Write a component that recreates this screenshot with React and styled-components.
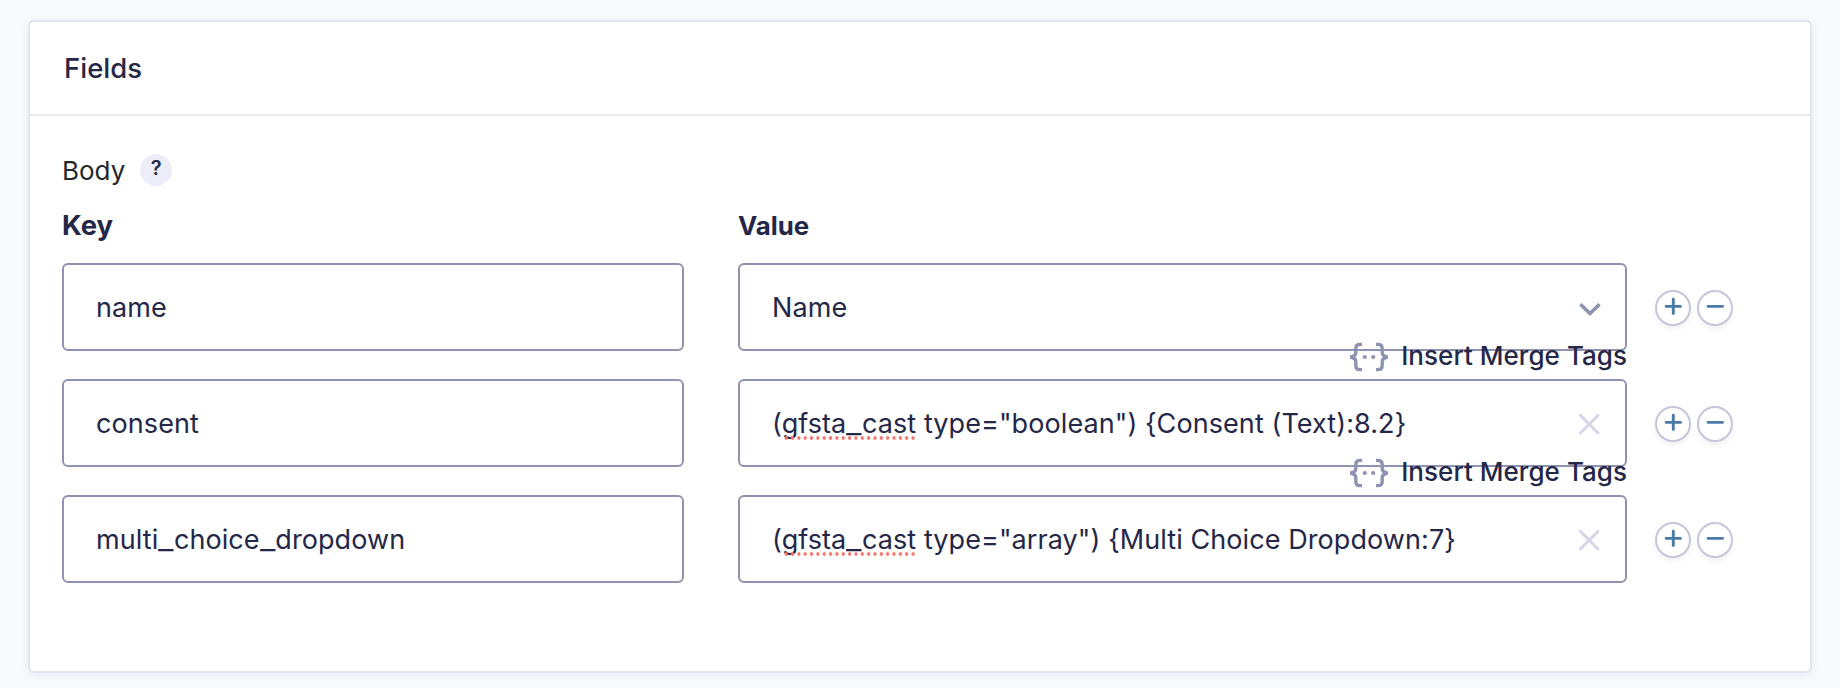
import React from "react";
import styled, { createGlobalStyle } from "styled-components";

const GlobalStyle = createGlobalStyle`
  *, *::before, *::after { box-sizing: border-box; }
  body {
    margin: 0;
    min-height: 688px;
    background: #f7f9fd;
    color: #242748;
    font-family: Inter, "Liberation Sans", sans-serif;
  }
`;

const Page = styled.main`
  padding: 20px 28px 15px;
`;

const Card = styled.section`
  height: 653px;
  background: #fff;
  border: 2px solid #e3e4f0;
  border-radius: 6px;
  box-shadow: 0 2px 10px rgba(36, 39, 72, 0.06);
`;

const CardHeader = styled.header`
  display: flex;
  align-items: center;
  height: 94px;
  padding: 0 34px;
  border-bottom: 2px solid #ebebf2;
`;

const CardTitle = styled.h2`
  margin: 0;
  font-size: 27.5px;
  font-weight: 450;
  line-height: 36px;
`;

const CardBody = styled.div`
  padding: 36px 32px 0;
`;

const LabelRow = styled.div`
  display: flex;
  align-items: center;
  gap: 15px;
  height: 36px;
`;

const FieldLabel = styled.span`
  padding-top: 2px;
  font-size: 26px;
  font-weight: 430;
  line-height: 36px;
  color: #23282d;
`;

const HelpBadge = styled.span`
  width: 32px;
  height: 32px;
  border-radius: 50%;
  background: #ecedf8;
  text-align: center;
  font-size: 20px;
  font-weight: 600;
  line-height: 29px;
`;

const MapGrid = styled.div`
  display: grid;
  grid-template-columns: 622px 889px auto;
  column-gap: 54px;
`;

const Columns = styled(MapGrid)`
  height: 75px;
  padding-top: 19px;
`;

const ColumnTitle = styled.div`
  font-size: ${(p) => p.$size}px;
  font-weight: 700;
  line-height: ${(p) => p.$line}px;
`;

const Rows = styled.div`
  display: flex;
  flex-direction: column;
  gap: 28px;
`;

const Row = styled(MapGrid)`
  align-items: center;
  height: 88px;
`;

const Field = styled.div`
  position: relative;
  display: flex;
  align-items: center;
  justify-content: space-between;
  height: 88px;
  padding: 2px 23px 0 32px;
  border: 2px solid #9092b2;
  border-radius: 6px;
  font-size: 27px;
  line-height: 36px;
  letter-spacing: 0.08px;
  white-space: pre;
`;

const WideUnderscore = styled.span`
  display: inline-block;
  width: 15.6px;
  letter-spacing: 0;
  transform: scaleX(1.25);
  transform-origin: left;
`;

const Misspelt = styled.span`
  position: relative;
  &::after {
    content: "";
    position: absolute;
    left: 1px;
    right: 0;
    top: 29px;
    height: 4px;
    background: radial-gradient(circle, #f4766c 1.5px, transparent 2px) 0 0 / 6.35px 4px;
  }
`;

const MergeTags = styled.div`
  position: absolute;
  right: -2px;
  bottom: -27px;
  display: flex;
  align-items: center;
  gap: 12px;
  font-size: 26px;
  font-weight: 480;
  line-height: 36px;
  letter-spacing: 0.04px;
`;

const MergeTagsLabel = styled.span`
  padding-bottom: 2px;
`;

const Actions = styled.div`
  display: flex;
  gap: 6px;
  margin: 2px 0 0 -26px;
`;

const RoundButton = styled.span`
  display: flex;
  width: 36px;
  height: 36px;
  border: 2px solid #c5c6dc;
  border-radius: 50%;
  background: #fff;
  box-shadow: 0 4px 4px rgba(30, 30, 50, 0.05);
`;

const Stroke = styled.svg`
  display: block;
  flex: none;
  fill: none;
  stroke: ${(p) => p.$color};
  stroke-width: ${(p) => p.$weight};
  stroke-linecap: ${(p) => p.$cap || "round"};
`;

const Chevron = () => (
  <Stroke width="24" height="20" viewBox="0 0 24 20" $color="#9092b2" $weight="3.6" $cap="butt">
    <path d="M2.4 6.3 12 15.6 21.6 6.3" />
  </Stroke>
);

const Clear = () => (
  <Stroke width="24" height="24" viewBox="0 0 24 24" $color="#d5d6e8" $weight="2.9">
    <path d="M2.4 3.4 20 21M20 3.4 2.4 21" />
  </Stroke>
);

const Braces = () => (
  <Stroke width="40" height="30" viewBox="0 0 40 30" $color="#9092b2" $weight="3.4" $cap="butt">
    <path d="M13 2.4H11Q6.8 2.4 6.8 6.6V10.4Q6.8 13.8 1.4 15Q6.8 16.2 6.8 19.6V23.4Q6.8 27.6 11 27.6H13" />
    <path d="M27 2.4H29Q33.2 2.4 33.2 6.6V10.4Q33.2 13.8 38.6 15Q33.2 16.2 33.2 19.6V23.4Q33.2 27.6 29 27.6H27" />
    <circle cx="15.8" cy="15" r="2.1" fill="#9092b2" stroke="none" />
    <circle cx="24.2" cy="15" r="2.1" fill="#9092b2" stroke="none" />
  </Stroke>
);

const Sign = ({ plus }) => (
  <RoundButton>
    <Stroke width="32" height="32" viewBox="0 0 32 32" $color="#4a7ba6" $weight="2.9">
      <path d={plus ? "M9.1 14.4H23.5M16.3 7.2V21.6" : "M9.1 14.4H23.5"} />
    </Stroke>
  </RoundButton>
);

const Identifier = ({ text }) =>
  text.split(/(_)/).map((part, i) =>
    part === "_" ? <WideUnderscore key={i}>_</WideUnderscore> : part
  );

const CastValue = ({ rest }) => (
  <span>
    (
    <Misspelt>
      <Identifier text="gfsta_cast" />
    </Misspelt>
    {rest}
  </span>
);

const rows = [
  { key: "name", value: <span>Name</span>, select: true, tags: true },
  {
    key: "consent",
    value: <CastValue rest={' type="boolean") {Consent (Text):8.2}'} />,
    tags: true,
  },
  {
    key: "multi_choice_dropdown",
    value: <CastValue rest={' type="array") {Multi Choice Dropdown:7}'} />,
  },
];

export default function App() {
  return (
    <>
      <GlobalStyle />
      <Page>
        <Card>
          <CardHeader>
            <CardTitle>Fields</CardTitle>
          </CardHeader>
          <CardBody>
            <LabelRow>
              <FieldLabel>Body</FieldLabel>
              <HelpBadge>?</HelpBadge>
            </LabelRow>
            <Columns>
              <ColumnTitle $size={27.5} $line={36}>Key</ColumnTitle>
              <ColumnTitle $size={25.8} $line={37}>Value</ColumnTitle>
            </Columns>
            <Rows>
              {rows.map((row) => (
                <Row key={row.key}>
                  <Field>
                    <span>
                      <Identifier text={row.key} />
                    </span>
                  </Field>
                  <Field>
                    {row.value}
                    {row.select ? <Chevron /> : <Clear />}
                    {row.tags && (
                      <MergeTags>
                        <Braces />
                        <MergeTagsLabel>Insert Merge Tags</MergeTagsLabel>
                      </MergeTags>
                    )}
                  </Field>
                  <Actions>
                    <Sign plus />
                    <Sign />
                  </Actions>
                </Row>
              ))}
            </Rows>
          </CardBody>
        </Card>
      </Page>
    </>
  );
}
